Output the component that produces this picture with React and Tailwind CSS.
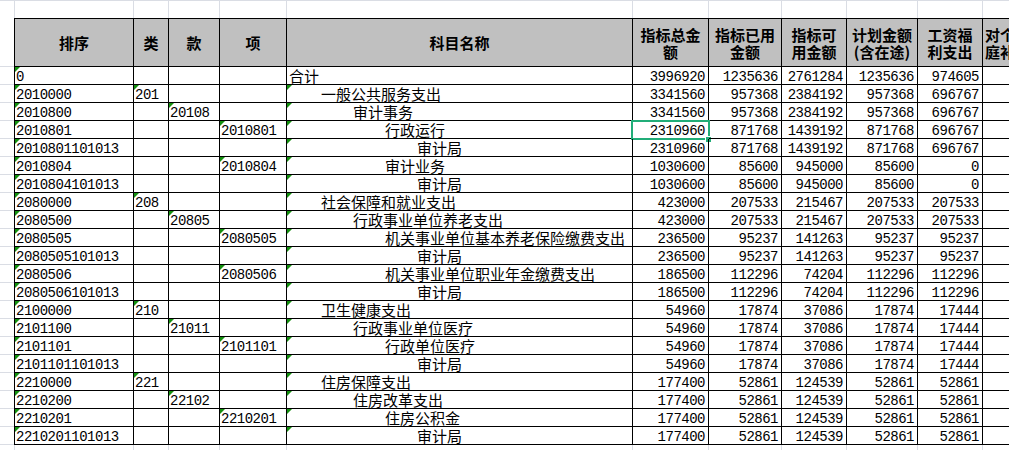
import React from "react";

const cjk = "font-['Noto_Sans_CJK_SC',sans-serif]";
const mono = "font-['Liberation_Mono',monospace] text-[14px] tracking-[-0.5px] leading-[13px] pt-[4px]";
const grid = "border-[#dadde4]";

const rows = [
  { code: "0", lei: "", kuan: "", xiang: "", name: "合计", lvl: 0, v: [3996920, 1235636, 2761284, 1235636, 974605] },
  { code: "2010000", lei: "201", kuan: "", xiang: "", name: "一般公共服务支出", lvl: 1, v: [3341560, 957368, 2384192, 957368, 696767] },
  { code: "2010800", lei: "", kuan: "20108", xiang: "", name: "审计事务", lvl: 2, v: [3341560, 957368, 2384192, 957368, 696767] },
  { code: "2010801", lei: "", kuan: "", xiang: "2010801", name: "行政运行", lvl: 3, v: [2310960, 871768, 1439192, 871768, 696767], sel: true },
  { code: "2010801101013", lei: "", kuan: "", xiang: "", name: "审计局", lvl: 4, v: [2310960, 871768, 1439192, 871768, 696767] },
  { code: "2010804", lei: "", kuan: "", xiang: "2010804", name: "审计业务", lvl: 3, v: [1030600, 85600, 945000, 85600, 0] },
  { code: "2010804101013", lei: "", kuan: "", xiang: "", name: "审计局", lvl: 4, v: [1030600, 85600, 945000, 85600, 0] },
  { code: "2080000", lei: "208", kuan: "", xiang: "", name: "社会保障和就业支出", lvl: 1, v: [423000, 207533, 215467, 207533, 207533] },
  { code: "2080500", lei: "", kuan: "20805", xiang: "", name: "行政事业单位养老支出", lvl: 2, v: [423000, 207533, 215467, 207533, 207533] },
  { code: "2080505", lei: "", kuan: "", xiang: "2080505", name: "机关事业单位基本养老保险缴费支出", lvl: 3, v: [236500, 95237, 141263, 95237, 95237] },
  { code: "2080505101013", lei: "", kuan: "", xiang: "", name: "审计局", lvl: 4, v: [236500, 95237, 141263, 95237, 95237] },
  { code: "2080506", lei: "", kuan: "", xiang: "2080506", name: "机关事业单位职业年金缴费支出", lvl: 3, v: [186500, 112296, 74204, 112296, 112296] },
  { code: "2080506101013", lei: "", kuan: "", xiang: "", name: "审计局", lvl: 4, v: [186500, 112296, 74204, 112296, 112296] },
  { code: "2100000", lei: "210", kuan: "", xiang: "", name: "卫生健康支出", lvl: 1, v: [54960, 17874, 37086, 17874, 17444] },
  { code: "2101100", lei: "", kuan: "21011", xiang: "", name: "行政事业单位医疗", lvl: 2, v: [54960, 17874, 37086, 17874, 17444] },
  { code: "2101101", lei: "", kuan: "", xiang: "2101101", name: "行政单位医疗", lvl: 3, v: [54960, 17874, 37086, 17874, 17444] },
  { code: "2101101101013", lei: "", kuan: "", xiang: "", name: "审计局", lvl: 4, v: [54960, 17874, 37086, 17874, 17444] },
  { code: "2210000", lei: "221", kuan: "", xiang: "", name: "住房保障支出", lvl: 1, v: [177400, 52861, 124539, 52861, 52861] },
  { code: "2210200", lei: "", kuan: "22102", xiang: "", name: "住房改革支出", lvl: 2, v: [177400, 52861, 124539, 52861, 52861] },
  { code: "2210201", lei: "", kuan: "", xiang: "2210201", name: "住房公积金", lvl: 3, v: [177400, 52861, 124539, 52861, 52861] },
  { code: "2210201101013", lei: "", kuan: "", xiang: "", name: "审计局", lvl: 4, v: [177400, 52861, 124539, 52861, 52861] },
];

const indent = ["pl-[2px]", "pl-[34px]", "pl-[66px]", "pl-[98px]", "pl-[130px]"];
const valW = ["w-[76px]", "w-[73px]", "w-[65px]", "w-[71px]", "w-[65px]"];

const headers = [
  { w: "w-[120px] border-l", lines: ["排序"] },
  { w: "w-[35px]", lines: ["类"] },
  { w: "w-[51px]", lines: ["款"] },
  { w: "w-[67px]", lines: ["项"] },
  { w: "w-[346px]", lines: ["科目名称"] },
  { w: "w-[76px]", lines: ["指标总金", "额"] },
  { w: "w-[73px]", lines: ["指标已用", "金额"] },
  { w: "w-[65px]", lines: ["指标可", "用金额"] },
  { w: "w-[71px]", lines: ["计划金额", "(含在途)"] },
  { w: "w-[65px]", lines: ["工资福", "利支出"] },
  { w: "w-[80px]", lines: ["对个人和家", "庭补助支出"] },
];

const stripW = ["w-[15px]", "w-[119px]", "w-[35px]", "w-[51px]", "w-[67px]", "w-[346px]", "w-[76px]", "w-[73px]", "w-[65px]", "w-[71px]", "w-[65px]", "w-[80px]"];

function Tri() {
  return <span className="absolute left-0 top-0 h-0 w-0 border-t-[5px] border-r-[5px] border-t-[#14900f] border-r-transparent" />;
}

function GridStrip({ h, top }) {
  return (
    <div className={`flex ${h} ${top ? `border-t ${grid}` : ""}`}>
      {stripW.map((w, i) => (
        <div key={i} className={`${w} shrink-0 border-r ${grid}`} />
      ))}
    </div>
  );
}

function TextCell({ w, text, tri }) {
  return (
    <div className={`${w} relative h-[18px] shrink-0 overflow-hidden whitespace-nowrap border-r border-b border-black pl-[1px] ${mono}`}>
      {tri && <Tri />}
      {text && <span className="inline-block align-top">{text}</span>}
    </div>
  );
}

export default function App() {
  return (
    <div className="h-[450px] w-[1009px] overflow-hidden bg-white text-black">
      <GridStrip h="h-[18px]" top />

      <div className="flex h-[49px]">
        <div className={`w-[14px] shrink-0 border-b ${grid}`} />
        {headers.map((hd, i) => (
          <div
            key={i}
            className={`${hd.w} flex shrink-0 flex-col items-center justify-center overflow-hidden whitespace-nowrap border-y border-r border-black bg-[#c0c0c0] ${cjk} text-[15px] font-bold`}
          >
            {hd.lines.map((l) => (
              <div key={l} className="h-[17px] leading-[17px]">
                {l}
              </div>
            ))}
          </div>
        ))}
      </div>

      {rows.map((r) => (
        <div key={r.code} className="flex h-[18px]">
          <div className={`w-[14px] shrink-0 border-b ${grid}`} />
          <TextCell w="w-[120px] border-l" text={r.code} tri />
          <TextCell w="w-[35px]" text={r.lei} tri={!!r.lei} />
          <TextCell w="w-[51px]" text={r.kuan} tri={!!r.kuan} />
          <TextCell w="w-[67px]" text={r.xiang} tri={!!r.xiang} />
          <div className={`relative h-[18px] w-[346px] shrink-0 overflow-hidden whitespace-nowrap border-r border-b border-black ${indent[r.lvl]} ${cjk} text-[15px] leading-[17px]`}>
            {r.lvl > 0 && <Tri />}
            <span className="inline-block h-[17px] align-top leading-[17px]">{r.name}</span>
          </div>
          {r.v.map((n, i) => (
            <div
              key={i}
              className={`${valW[i]} relative h-[18px] shrink-0 whitespace-nowrap border-r border-b border-black pr-[3px] text-right ${mono} ${r.sel && i === 0 ? "" : "overflow-hidden"}`}
            >
              <span className="inline-block align-top">{n}</span>
              {r.sel && i === 0 && (
                <span className="absolute -left-[2px] -top-[1px] h-[20px] w-[79px] border-2 border-[#21ad78]">
                  <span className="absolute left-[72px] top-[14px] h-[7px] w-[7px] border border-white bg-[#21ad78]" />
                </span>
              )}
            </div>
          ))}
          <div className="h-[18px] w-[80px] shrink-0 border-r border-b border-black" />
        </div>
      ))}

      <GridStrip h="h-[10px]" />
    </div>
  );
}
